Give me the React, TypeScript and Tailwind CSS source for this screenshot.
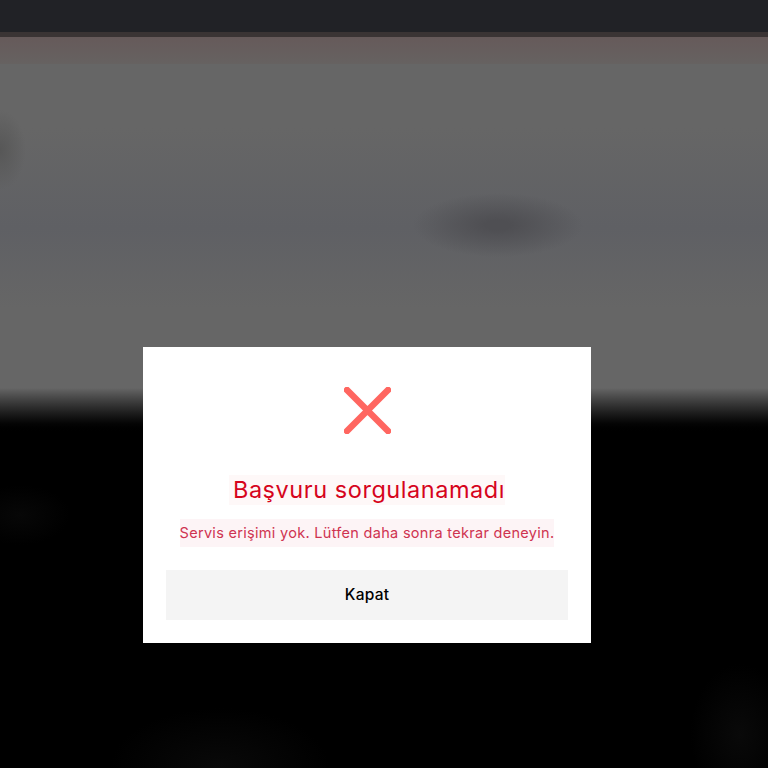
import React from 'react';

const font = { fontFamily: 'Inter, "DejaVu Sans", sans-serif' };

export default function App() {
  return (
    <div className="relative flex h-[768px] w-[768px] flex-col overflow-hidden bg-black">
      {/* Dimmed page behind the dialog */}
      <div className="h-8 bg-[#212226]" />
      <div className="h-[5px] bg-[#3a3434]" />
      <div className="h-[27px] bg-gradient-to-b from-[#665a5a] to-[#666261]" />
      <div className="h-[324px] bg-[radial-gradient(ellipse_85px_32px_at_498px_161px,#4f4f53_15%,transparent),radial-gradient(ellipse_26px_40px_at_0px_86px,#575757,transparent),linear-gradient(to_bottom,#666666_0,#666666_64px,#5f6064_164px,#666666_244px,#666666_100%)]" />
      <div className="h-[46px] bg-gradient-to-b from-[#666666] to-black" />
      <div className="flex-1 bg-[radial-gradient(ellipse_50px_30px_at_20px_81px,#070707,transparent),radial-gradient(ellipse_110px_60px_at_220px_334px,#090909,transparent),radial-gradient(ellipse_50px_70px_at_740px_300px,#090909,transparent)]" />

      {/* Dialog */}
      <div className="absolute inset-0 pl-[143px] pt-[347px]">
        <div className="flex h-[296px] w-[448px] flex-col items-center bg-white px-[23px] pt-10" style={font}>
          <svg className="h-[47px] w-[47px]" viewBox="0 0 47 47" fill="none" stroke="#ff6660" strokeWidth="6.5" strokeLinecap="round">
            <path d="M3 3 L44 44 M44 3 L3 44" />
          </svg>
          <h1 className="mt-[41px] flex h-[30px] items-center bg-[#fef8f8] pl-1 text-[23.5px] font-normal tracking-[0.55px] text-[#d6041c]">Başvuru sorgulanamadı</h1>
          <p className="mt-[14px] flex h-[28px] items-center bg-[#fdf4f6] text-[14.5px] tracking-[0.3px] text-[#cf3350]">Servis erişimi yok. Lütfen daha sonra tekrar deneyin.</p>
          <button className="mt-[23px] h-[50px] w-[402px] bg-[#f4f4f4] text-[15.5px] font-[450] tracking-[0.2px] text-black">Kapat</button>
        </div>
      </div>
    </div>
  );
}
